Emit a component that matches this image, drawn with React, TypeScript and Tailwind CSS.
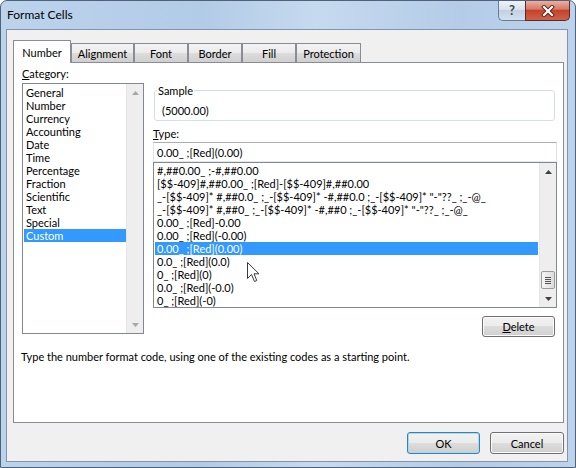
import React from 'react';

const categories = [
    'General', 'Number', 'Currency', 'Accounting', 'Date', 'Time',
    'Percentage', 'Fraction', 'Scientific', 'Text', 'Special', 'Custom',
];

const formats = [
    '#,##0.00_ ;-#,##0.00',
    '[$$-409]#,##0.00_ ;[Red]-[$$-409]#,##0.00',
    '_-[$$-409]* #,##0.0_ ;_-[$$-409]* -#,##0.0 ;_-[$$-409]* "-"??_ ;_-@_',
    '_-[$$-409]* #,##0_ ;_-[$$-409]* -#,##0 ;_-[$$-409]* "-"??_ ;_-@_',
    '0.00_ ;[Red]-0.00',
    '0.00_ ;[Red](-0.00)',
    '0.00_ ;[Red](0.00)',
    '0.0_ ;[Red](0.0)',
    '0_ ;[Red](0)',
    '0.0_ ;[Red](-0.0)',
    '0_ ;[Red](-0)',
];

const tabs = [
    { name: 'Number', w: 'w-[58px]' },
    { name: 'Alignment', w: 'w-[63px]' },
    { name: 'Font', w: 'w-[54px]' },
    { name: 'Border', w: 'w-[54px]' },
    { name: 'Fill', w: 'w-[54px]' },
    { name: 'Protection', w: 'w-[65px]' },
];

const btn = 'flex items-center justify-center rounded-[3px] border text-[11px] leading-[13px] text-black bg-[linear-gradient(to_bottom,#f2f2f2_0%,#ebebeb_50%,#dddddd_50%,#cfcfcf_100%)]';

function Arrow({ up, color }: { up?: boolean; color: string }) {
    return (
        <svg width="7" height="4" viewBox="0 0 7 4">
            <path d={up ? 'M0 4 L3.5 0 L7 4 Z' : 'M0 0 L7 0 L3.5 4 Z'} fill={color} />
        </svg>
    );
}

export default function App() {
    return (
        <div className="relative w-[576px] h-[468px] flex flex-col rounded-t-[7px] border border-[#4f6279] bg-[linear-gradient(to_right,#bcd3ec_0%,#b2cbe7_35%,#c6daef_55%,#b4cce8_80%,#bdd3ec_100%)] font-['Lato',sans-serif] overflow-hidden">
            {/* Title bar */}
            <div className="h-[28px] flex items-start">
                <div className="flex-1 pl-[6px] pt-[7px] text-[12px] leading-[14px] text-black">Format Cells</div>
                <div className="w-[27px] h-[20px] flex items-center justify-center rounded-bl-[5px] border border-t-0 border-r-0 border-[#6a7c92] bg-[linear-gradient(to_bottom,#eef3f9_0%,#d8e2ee_45%,#c2d0e2_50%,#d4e0ee_100%)] text-[13px] font-bold text-[#4a4a4a]">?</div>
                <div className="w-[45px] h-[20px] mr-[5px] flex items-center justify-center rounded-br-[5px] border border-t-0 border-[#5c2a22] bg-[linear-gradient(to_bottom,#eab0a2_0%,#d97a66_42%,#c4432d_50%,#cf6149_100%)]">
                    <svg width="14" height="12" viewBox="0 0 14 12">
                        <path d="M3 2 L11 10 M11 2 L3 10" stroke="#5a2018" strokeWidth="4" strokeLinecap="square" />
                        <path d="M3 2 L11 10 M11 2 L3 10" stroke="#ffffff" strokeWidth="2.2" strokeLinecap="square" />
                    </svg>
                </div>
            </div>

            {/* Client area */}
            <div className="ml-[5px] mr-[7px] mb-[5px] flex-1 flex flex-col border border-[#8494a8] bg-[#f0f0f0]">
                {/* Tabs */}
                <div className="ml-[6px] mt-[10px] h-[22px] flex items-end">
                    {tabs.map((t, i) =>
                        i === 0 ? (
                            <div key={t.name} className={`${t.w} relative z-10 -mb-px h-[23px] pt-[5px] flex justify-center border border-b-0 border-[#898c95] bg-white text-[11px] leading-[14px] text-black`}>
                                {t.name}
                            </div>
                        ) : (
                            <div key={t.name} className={`${t.w} h-[19px] pt-[3px] flex justify-center border border-b-0 border-[#898c95] bg-[linear-gradient(to_bottom,#f3f3f3_0%,#ebebeb_50%,#dddddd_51%,#cfcfcf_100%)] text-[11px] leading-[14px] text-black`}>
                                {t.name}
                            </div>
                        ),
                    )}
                </div>

                {/* Tab panel */}
                <div className="ml-[6px] w-[551px] h-[361px] border border-[#898c95] bg-white flex flex-col">
                    <div className="flex pl-[8px] pt-[4px]">
                        {/* Category */}
                        <div className="w-[122px] flex flex-col">
                            <div className="h-[13px] text-[11px] leading-[13px] text-black"><span className="underline">C</span>ategory:</div>
                            <div className="mt-[3px] h-[251px] flex border border-[#828790] bg-white">
                                <div className="flex-1 pt-[2px]">
                                    {categories.map(c => (
                                        <div key={c} className={`ml-[1px] h-[13px] pl-[2px] text-[11px] leading-[13px] ${c === 'Custom' ? 'bg-[#3399ff] text-white' : 'text-black'}`}>{c}</div>
                                    ))}
                                </div>
                                <div className="w-[17px] flex flex-col justify-between bg-[#eeeeee] border-l border-[#e6e6e6]">
                                    <div className="h-[17px] flex items-center justify-center"><Arrow up color="#a8a8a8" /></div>
                                    <div className="h-[17px] flex items-center justify-center"><Arrow color="#a8a8a8" /></div>
                                </div>
                            </div>
                        </div>

                        {/* Right column */}
                        <div className="ml-[9px] w-[404px] flex flex-col">
                            <div className="relative mt-[23px] ml-[1px] w-[401px] h-[31px] rounded-[3px] border border-[#d5dfe5]">
                                <span className="absolute left-[2px] -top-[7px] px-[1px] bg-white text-[11px] leading-[13px] text-black">Sample</span>
                                <div className="pl-[7px] pt-[13px] text-[11px] leading-[13px] text-black">(5000.00)</div>
                            </div>
                            <div className="mt-[6px] h-[13px] text-[11px] leading-[13px] text-black"><span className="underline">T</span>ype:</div>
                            <div className="mt-[2px] h-[20px] flex items-center pl-[3px] border border-[#abadb3] border-l-[#e2e3ea] border-r-[#dbdfe6] border-b-[#e3e9ef] bg-white text-[11px] leading-[13px] text-black whitespace-pre">0.00_ ;[Red](0.00)</div>
                            <div className="h-[146px] flex border border-[#828790] bg-white">
                                <div className="flex-1 min-w-0 pt-[1px] overflow-hidden">
                                    {formats.map((f, i) => (
                                        <div key={i} className={`mx-[1px] h-[13px] pl-[2px] text-[11px] leading-[13px] whitespace-pre overflow-hidden ${i === 6 ? 'bg-[#3399ff] text-white' : 'text-black'}`}>{f}</div>
                                    ))}
                                </div>
                                <div className="w-[17px] flex flex-col bg-[#eeeeee] border-l border-[#e6e6e6]">
                                    <div className="h-[17px] flex items-center justify-center"><Arrow up color="#404040" /></div>
                                    <div className="flex-1" />
                                    <div className="mx-[1px] mb-[1px] h-[18px] flex flex-col items-center justify-center gap-[1px] rounded-[2px] border border-[#9b9b9b] bg-[linear-gradient(to_right,#f4f4f4_0%,#e9e9e9_50%,#dcdcdc_100%)]">
                                        <div className="w-[6px] h-[1px] bg-[#555555]" />
                                        <div className="w-[6px] h-[1px] bg-[#555555]" />
                                        <div className="w-[6px] h-[1px] bg-[#555555]" />
                                        <div className="w-[6px] h-[1px] bg-[#555555]" />
                                    </div>
                                    <div className="h-[17px] flex items-center justify-center"><Arrow color="#404040" /></div>
                                </div>
                            </div>
                            <div className="self-end mr-[2px] mt-[8px]">
                                <div className={`${btn} w-[73px] h-[21px] border-[#707070] shadow-[inset_0_0_0_1px_#fbfbfb]`}>
                                    <span><span className="underline">D</span>elete</span>
                                </div>
                            </div>
                        </div>
                    </div>
                    <div className="pl-[7px] mt-[13px] text-[11px] leading-[13px] text-black">
                        Type the number format code, using one of the existing codes as a starting point.
                    </div>
                </div>

                {/* Buttons */}
                <div className="mt-[9px] ml-[400px] flex gap-[10px]">
                    <div className={`${btn} w-[73px] h-[22px] border-[#3c7fb1] shadow-[inset_0_0_0_1px_#9fdcf8]`}>OK</div>
                    <div className={`${btn} w-[74px] h-[22px] border-[#707070] shadow-[inset_0_0_0_1px_#fbfbfb]`}>Cancel</div>
                </div>
            </div>

            {/* Mouse pointer */}
            <svg className="absolute left-[246px] top-[261px]" width="13" height="21" viewBox="0 0 13 21">
                <path d="M0.5 0.5 L0.5 16.5 L4.5 12.5 L7.5 19.5 L9.8 18.5 L7 11.8 L12 11.8 Z" fill="#ffffff" stroke="#3a3a3a" strokeWidth="1" strokeLinejoin="miter" />
            </svg>
        </div>
    );
}
